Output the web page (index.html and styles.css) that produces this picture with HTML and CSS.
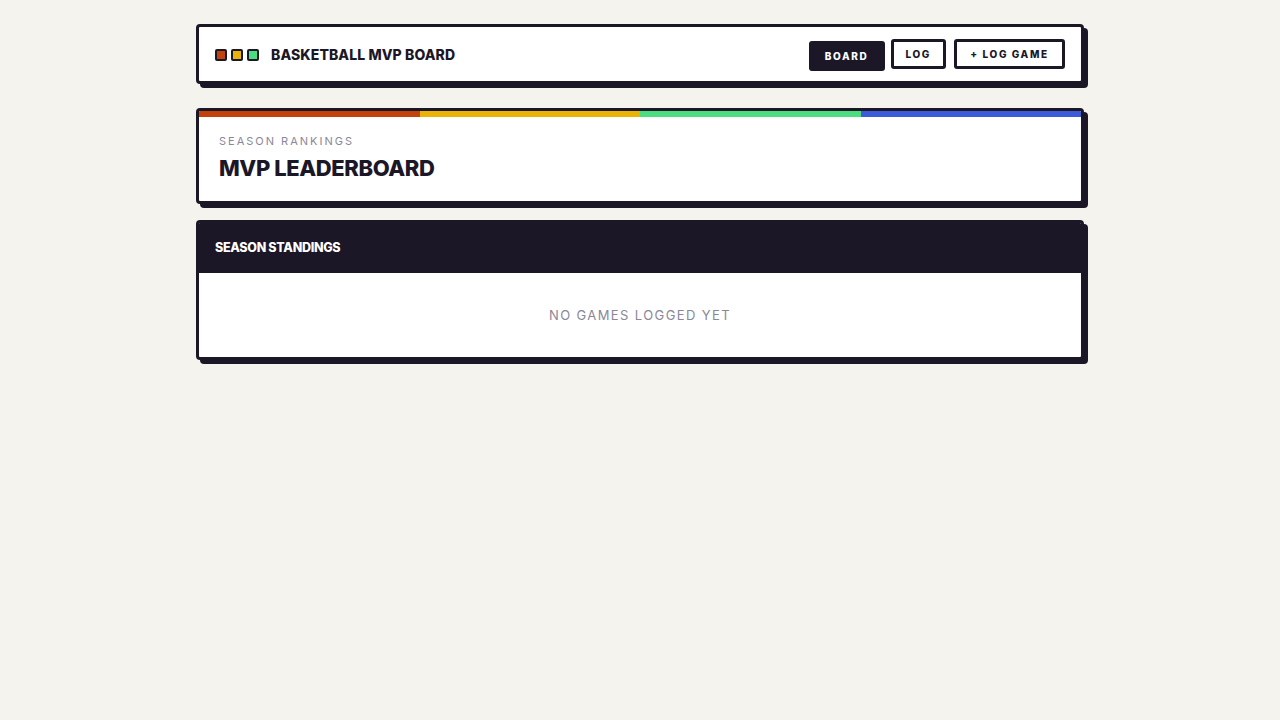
FILE: index.html
```html
<!DOCTYPE html>
<html>
<head>
<meta charset="utf-8">
<link rel="stylesheet" href="styles.css">
</head>
<body>
<div class="page">
  <header class="card topbar">
    <div class="brand">
      <div class="dots">
        <span class="dot dot-red"></span>
        <span class="dot dot-yellow"></span>
        <span class="dot dot-green"></span>
      </div>
      <span class="brand-title">BASKETBALL MVP BOARD</span>
    </div>
    <nav class="nav">
      <button class="btn btn-active">BOARD</button>
      <button class="btn">LOG</button>
      <button class="btn btn-wide">+ LOG GAME</button>
    </nav>
  </header>

  <section class="card hero">
    <div class="stripe">
      <span class="s-red"></span><span class="s-yellow"></span><span class="s-green"></span><span class="s-blue"></span>
    </div>
    <div class="hero-body">
      <div class="eyebrow">SEASON RANKINGS</div>
      <h1 class="hero-title">MVP LEADERBOARD</h1>
    </div>
  </section>

  <section class="card standings">
    <div class="standings-head">SEASON STANDINGS</div>
    <div class="standings-body">NO GAMES LOGGED YET</div>
  </section>
</div>
</body>
</html>
```

FILE: styles.css
```css
* { box-sizing: border-box; }
html, body { margin: 0; padding: 0; }
body {
  background: #f4f3ee;
  font-family: Inter, "Liberation Sans", sans-serif;
  color: #1b1726;
}
.page {
  width: 888px;
  margin: 24px auto 0 196px;
  padding-bottom: 40px;
  display: flex;
  flex-direction: column;
}
.card {
  background: #ffffff;
  border: 3px solid #1b1726;
  border-radius: 4px;
  box-shadow: 4px 4px 0 #1b1726;
}
.topbar {
  height: 60px;
  display: flex;
  align-items: center;
  justify-content: space-between;
  padding: 0 16px 0 16px;
}
.brand { display: flex; align-items: center; gap: 12px; }
.dots { display: flex; gap: 4px; padding-top: 1px; }
.dot {
  width: 12px; height: 12px;
  border: 2px solid #1b1726;
  border-radius: 2px;
  display: block;
}
.dot-red { background: #c2410c; }
.dot-yellow { background: #eab308; }
.dot-green { background: #4ade80; }
.brand-title {
  font-size: 14px;
  font-weight: 800;
  letter-spacing: 0.1px;
}
.nav { display: flex; gap: 8px; align-items: center; }
.btn {
  height: 30px;
  padding: 0 12px;
  background: #fff;
  border: 3px solid #1b1726;
  border-radius: 3px;
  font-family: Inter, "Liberation Sans", sans-serif;
  font-size: 10px;
  font-weight: 800;
  letter-spacing: 1.6px;
  color: #1b1726;
  cursor: pointer;
}
.btn-active {
  background: #1b1726;
  color: #fff;
  width: 76px;
  transform: translate(2px, 2px);
}
.btn-wide { width: 111px; }
.hero {
  margin-top: 24px;
  overflow: hidden;
}
.stripe { display: flex; height: 6px; }
.stripe span { flex: 1; }
.s-red { background: #c2410c; }
.s-yellow { background: #eab308; }
.s-green { background: #4ade80; }
.s-blue { background: #3b5bdb; }
.hero-body { padding: 17px 20px 19px; }
.eyebrow {
  font-size: 11px;
  letter-spacing: 2px;
  color: #8a8799;
  line-height: 14px;
}
.hero-title {
  margin: 6px 0 0;
  font-size: 22px;
  font-weight: 800;
  letter-spacing: -0.4px;
  line-height: 28px;
}
.standings {
  margin-top: 16px;
  overflow: hidden;
}
.standings-head {
  background: #1b1726;
  color: #fff;
  height: 50px;
  display: flex;
  align-items: center;
  padding: 0 16px 2px;
  font-size: 12.5px;
  font-weight: 800;
  letter-spacing: -0.3px;
}
.standings-body {
  height: 84px;
  display: flex;
  align-items: center;
  justify-content: center;
  font-size: 13px;
  letter-spacing: 1.4px;
  color: #8a8799;
}
```
